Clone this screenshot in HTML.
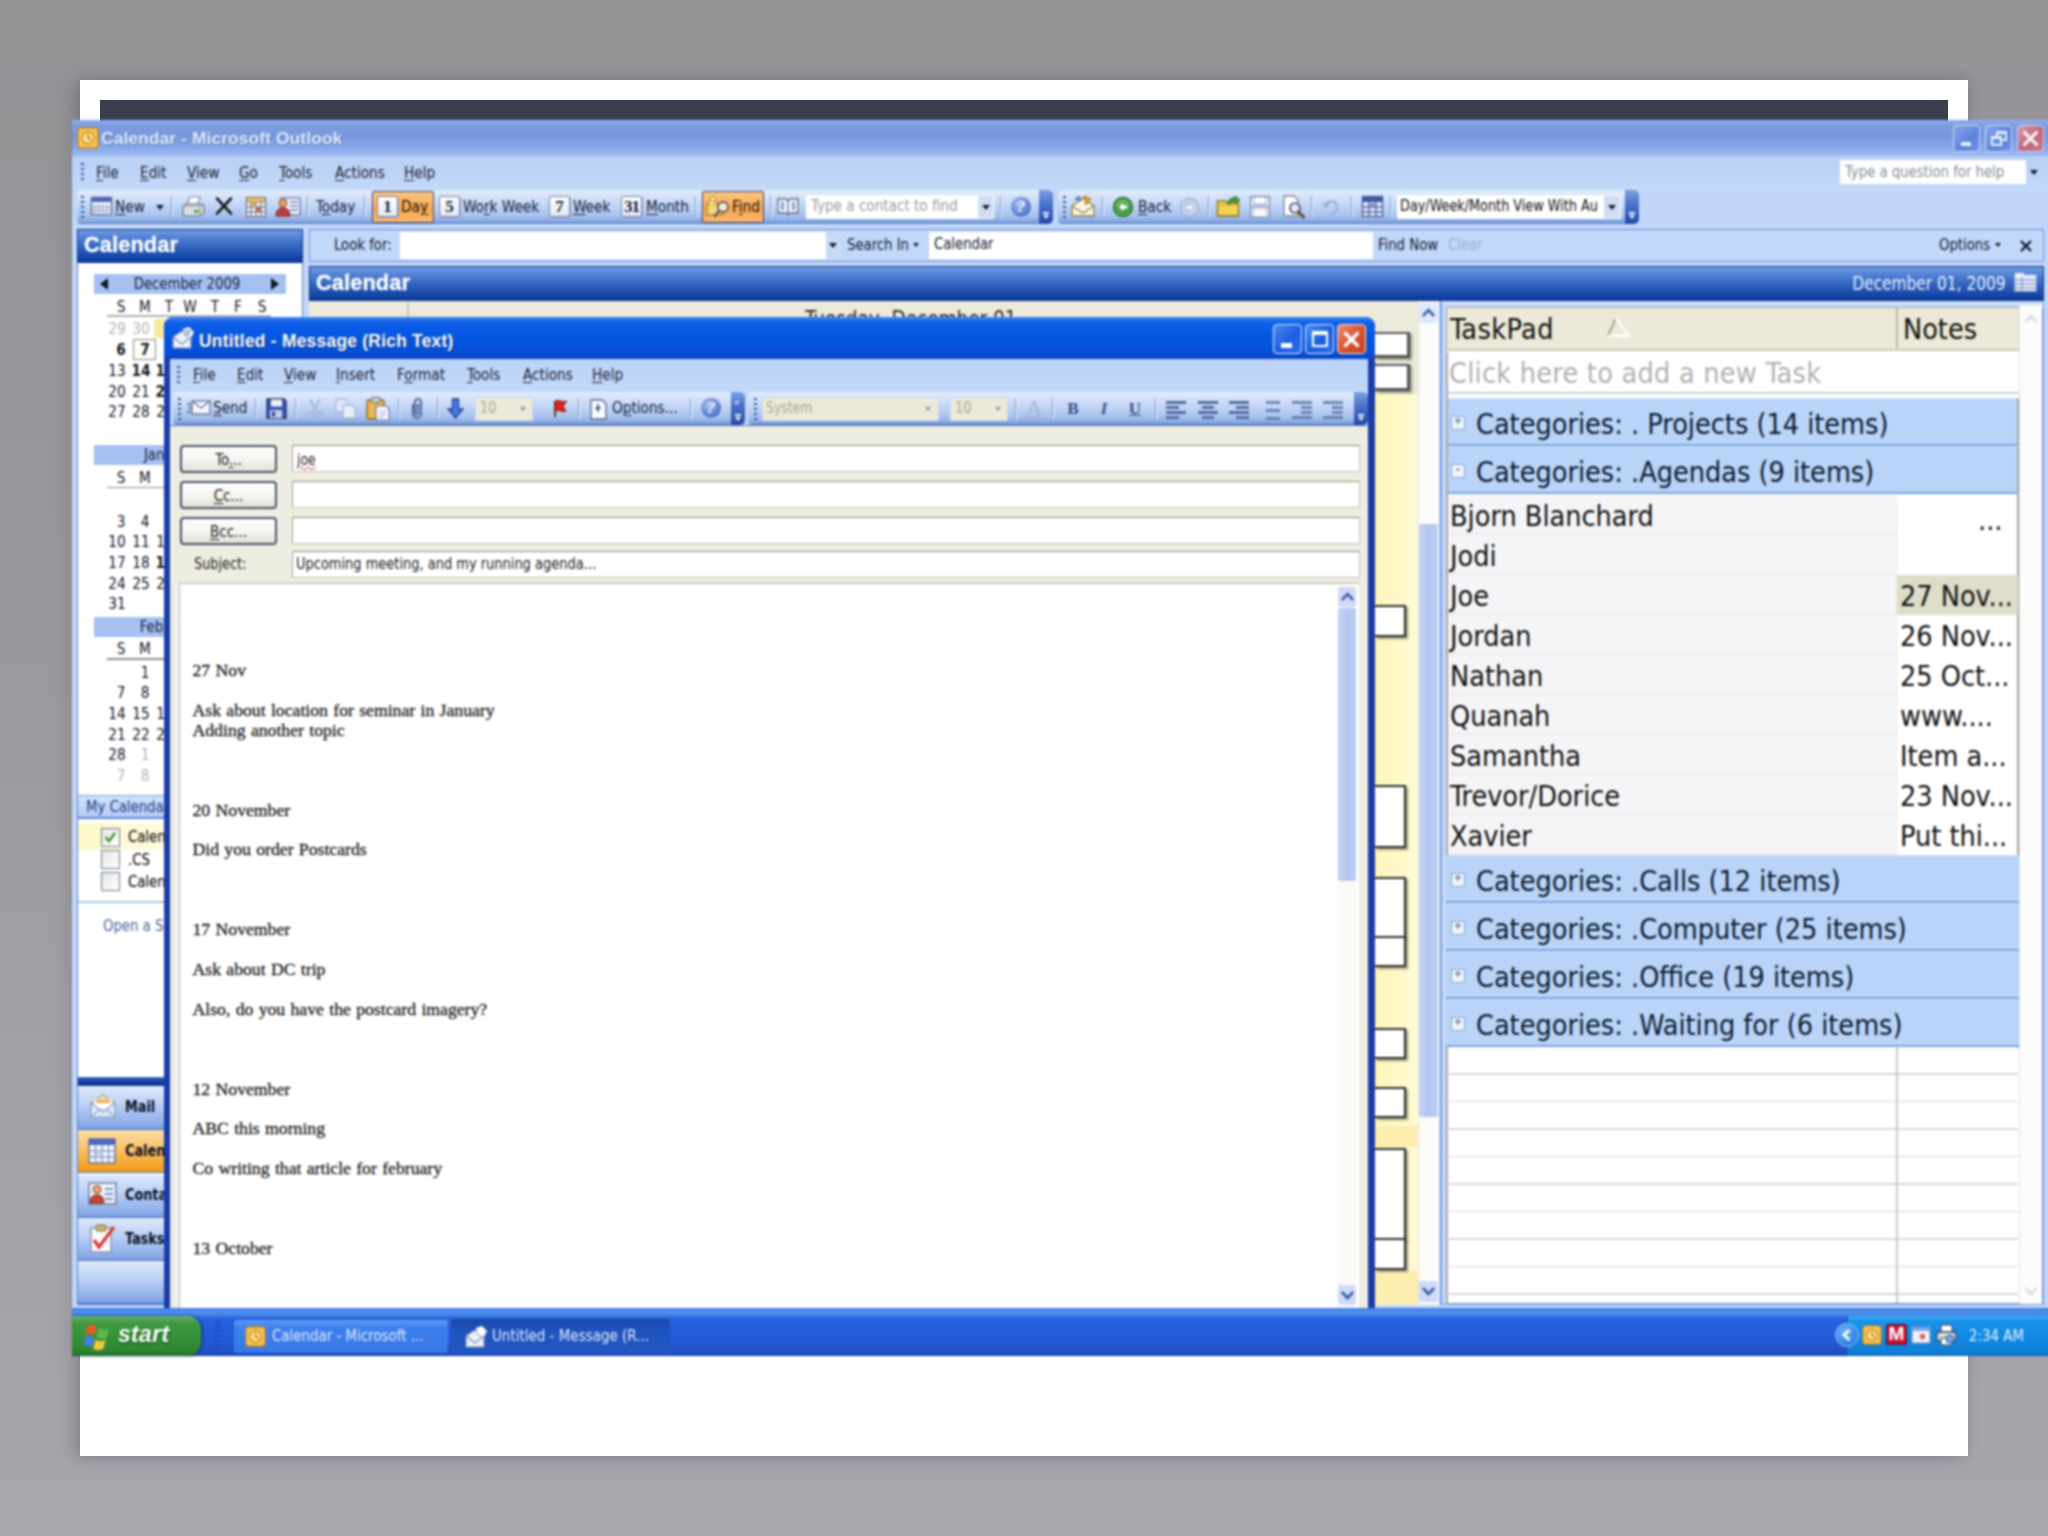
<!DOCTYPE html>
<html lang="en">
<head>
<meta charset="utf-8">
<title>Calendar - Microsoft Outlook</title>
<style>
html,body{margin:0;padding:0;}
body{width:2048px;height:1536px;overflow:hidden;background:#9f9ea4;}
#root{position:relative;width:2048px;height:1536px;overflow:hidden;
  background:linear-gradient(180deg,#949396 0%,#9a989d 40%,#a5a3aa 80%,#a9a7ae 100%);
  font-family:"DejaVu Sans","Liberation Sans",sans-serif;font-stretch:condensed;font-size:16.5px;color:#000;}
#root div,#root span,#root svg{position:absolute;box-sizing:border-box;white-space:nowrap;}
#root span.i{position:static;}
#root u{text-decoration:underline;text-underline-offset:2px;text-decoration-thickness:1.3px;}
#shot{left:0;top:0;width:2090px;height:1536px;filter:blur(0.8px);}
.slide{left:80px;top:80px;width:1888px;height:1376px;background:#fff;box-shadow:-8px 2px 18px rgba(60,60,70,.24),0 0 10px rgba(60,60,70,.16);}
.darkbar{left:100px;top:100px;width:1848px;height:22px;background:#3a3d4d;}
/* outlook main window */
.ol{left:72px;top:120px;width:2010px;height:1236px;background:#c1d6f8;}
.ol-title{left:72px;top:120px;width:2010px;height:36px;background:linear-gradient(180deg,#8fb0f0 0%,#7d9de2 14%,#7796dc 45%,#86a6e8 75%,#9dbbf1 100%);}
.ol-title .txt{left:29px;top:0;line-height:37px;font-family:"Liberation Sans",sans-serif;font-weight:bold;font-size:17.3px;color:#dfe9fb;letter-spacing:.15px;text-shadow:1px 1px 1px #5b78bd;}
.menubar{left:72px;top:156px;width:2010px;height:34px;background:linear-gradient(180deg,#b9cff5,#c3d9fa);}
.mi{top:156px;line-height:33px;font-size:16.5px;color:#1a2233;transform:scaleX(.92);transform-origin:0 50%;}
.tb{top:190px;height:34px;background:linear-gradient(180deg,#e2ecfc 0%,#c9dbf8 35%,#a9c3ee 75%,#86a8e2 92%,#5f84c8 100%);border-radius:4px 0 0 4px;}
.tbend{top:190px;width:14px;height:34px;background:linear-gradient(180deg,#7e9fe0 0%,#4b74cc 40%,#2549a4 100%);border-radius:0 5px 5px 0;}
.grip{width:3px;height:22px;top:196px;background:repeating-linear-gradient(180deg,#3b5a9a 0 2px,transparent 2px 5px);}
.sep{top:196px;width:2px;height:22px;background:linear-gradient(90deg,#7d9ad0 0 1px,#eef4ff 1px 2px);}
.tt{top:190px;line-height:33px;font-size:16.5px;color:#15203a;transform:scaleX(.92);transform-origin:0 50%;}
.s{transform:scaleX(.92);transform-origin:0 50%;}
.sr{transform:scaleX(.92);transform-origin:100% 50%;}
.sc{transform:scaleX(.92);transform-origin:50% 50%;}
.navhead{background:linear-gradient(180deg,#6f9ae0 0%,#4a7bd0 30%,#1d4fae 75%,#0c3b97 100%);border:1px solid #0f3a8c;}
.navhead .txt{left:6px;top:0;font-family:"Liberation Sans",sans-serif;font-weight:bold;font-size:21.5px;color:#fff;letter-spacing:.25px;-webkit-text-stroke:.3px #fff;}

.wbtn{border:1px solid #c9d8f7;border-radius:4px;}
.arr{width:0;height:0;border-left:4px solid transparent;border-right:4px solid transparent;border-top:5px solid #1a1a28;}
.endmark{left:3px;top:22px;width:8px;height:8px;}
.endmark:before{content:"";position:absolute;left:1px;top:0;width:6px;height:2px;background:#e8efff;}
.endmark:after{content:"";position:absolute;left:1px;top:3px;border-left:3.500px solid transparent;border-right:3.500px solid transparent;border-top:4px solid #e8efff;}
.obtn{background:linear-gradient(180deg,#fbc57f,#f8a752 60%,#f9b86c);border:1.500px solid #3a3f73;border-radius:2px;}
.cal1{width:21px;height:21px;background:linear-gradient(180deg,#fff,#e4e9f6);border:1.500px solid #7482a8;border-radius:2px;box-shadow:1px 1px 0 #9aa6c4;font-family:"Liberation Serif",serif;font-weight:bold;font-size:17px;line-height:20px;text-align:center;color:#1a1f3a;}
.helpq{width:22px;height:22px;border-radius:11px;background:radial-gradient(circle at 40% 35%,#a9c3f3,#4b74cf 70%,#3059b8);border:1px solid #c5d5f5;color:#f2f6ff;font-family:"Liberation Serif",serif;font-weight:bold;font-style:italic;font-size:17px;line-height:20px;text-align:center;}

.dn{width:24px;text-align:center;line-height:20px;font-size:16.5px;color:#15151f;transform:scaleX(.92);}
.dn.g{color:#b4b4b4;}
.dn.b{font-weight:bold;}
.cb{width:19px;height:19px;background:linear-gradient(135deg,#e6e6e0,#fff);border:1.500px solid #6a7a94;}
.nb{width:224px;background:linear-gradient(180deg,#dbe8fc 0%,#bcd2f6 40%,#8fb0ea 85%,#7b9fe3 100%);border-top:1px solid #f3f7ff;border-bottom:1.500px solid #3f68c0;}
.nb.o{background:linear-gradient(180deg,#fcdda4 0%,#f9c46c 40%,#f5a42a 85%,#f29a1c 100%);border-top:1px solid #fdebc8;}
.nt{font-family:"DejaVu Sans",sans-serif;font-weight:bold;font-size:15.5px;color:#0a1026;transform:scaleX(.92);transform-origin:0 50%;}

.ap{left:1375px;width:31px;background:#fff;border:2px solid #2b2b2b;border-left:0;box-shadow:2px 2px 2px rgba(90,90,70,.6);}
.tp{font-size:28.500px;color:#101010;}
.cat{left:1446px;width:573px;height:48px;background:#b9d4f8;border-bottom:2.500px solid #7ea4e2;border-top:1px solid #cfe0fa;}
.cat .ct{left:30px;top:3px;line-height:46px;color:#0c1a30;}
.pm{left:5px;top:17px;width:14px;height:14px;border:1.500px solid #8fa6cf;background:#eef4fd;font-family:"Liberation Mono",monospace;font-size:13px;line-height:10px;text-align:center;color:#3a4f7a;}
.it{left:1450px;line-height:40px;margin-top:2px;}
.nt2{left:1900px;line-height:40px;margin-top:2px;}

.fb{font-family:"Liberation Serif",serif;font-weight:bold;font-size:17px;line-height:33px;text-align:center;color:#3a4f8a;}
.al{top:399px;width:20px;height:20px;}
.al i{display:block;height:3px;margin-top:2px;background:#566ca6;}
.xb{width:97px;height:28px;border:2px solid #46536b;border-radius:4px;background:linear-gradient(180deg,#fdfdfc,#f3f3ef 60%,#e2e1d6);text-align:center;line-height:27px;font-size:15px;color:#1a1a1a;}
.fld{left:292px;width:1068px;height:27px;background:#fff;border:1.500px solid #c4c2b4;border-top-color:#8a8a80;border-left-color:#a5a598;}
.bt{left:192.500px;font-family:"Liberation Serif",serif;font-size:17.700px;line-height:20px;color:#1c1c1c;letter-spacing:0;word-spacing:.9px;-webkit-text-stroke:.3px #1c1c1c;}
</style>
</head>
<body>
<div id="root">
 <div class="slide"></div>
 <div class="darkbar"></div>
 <div id="shot">
 <div class="ol"></div>
 <div class="ol-title"><div class="txt">Calendar - Microsoft Outlook</div></div>
 <div class="menubar"></div>

 <!-- title icon + buttons -->
 <svg style="left:77px;top:127px" width="22" height="22" viewBox="0 0 22 22"><rect x="1" y="1" width="20" height="20" rx="3" fill="#f4c65a" stroke="#c48a1e" stroke-width="1.5"/><circle cx="11" cy="11" r="6" fill="#fbe39a" stroke="#e09a20" stroke-width="2"/><path d="M11 7v4l3 2" stroke="#c07a10" stroke-width="1.6" fill="none"/></svg>
 <div class="wbtn" style="left:1953px;top:125px;width:27px;height:27px;background:linear-gradient(135deg,#86a6ee,#5d82dc 60%,#6e93e6)"><div style="left:7px;top:16px;width:10px;height:4px;background:#e8effc"></div></div>
 <div class="wbtn" style="left:1985px;top:125px;width:27px;height:27px;background:linear-gradient(135deg,#86a6ee,#5d82dc 60%,#6e93e6)"><div style="left:10px;top:5px;width:11px;height:10px;border:2px solid #e4ecfb;border-top-width:3px"></div><div style="left:5px;top:10px;width:11px;height:10px;border:2px solid #e4ecfb;border-top-width:3px;background:#6a8ee2"></div></div>
 <div class="wbtn" style="left:2017px;top:125px;width:27px;height:27px;background:linear-gradient(135deg,#d99aa8,#c0677c 55%,#c97a8e)"><svg style="left:3px;top:3px" width="19" height="19" viewBox="0 0 19 19"><path d="M3.5 3.5l12 12M15.5 3.5l-12 12" stroke="#f7eef2" stroke-width="3.2" stroke-linecap="round"/></svg></div>
 <!-- menu -->
 <div class="grip" style="left:81px;top:163px;height:19px"></div>
 <div class="mi" style="left:96px"><u>F</u>ile</div>
 <div class="mi" style="left:140px"><u>E</u>dit</div>
 <div class="mi" style="left:187px"><u>V</u>iew</div>
 <div class="mi" style="left:239px"><u>G</u>o</div>
 <div class="mi" style="left:279px"><u>T</u>ools</div>
 <div class="mi" style="left:335px"><u>A</u>ctions</div>
 <div class="mi" style="left:404px"><u>H</u>elp</div>
 <div style="left:1840px;top:160px;width:186px;height:24px;background:#fff"></div>
 <div class="s" style="left:1845px;top:160px;line-height:23px;font-size:16px;color:#8a8e98">Type a question for help</div>
 <div class="arr" style="left:2030px;top:170px"></div>
 <!--MENU-->

 <!-- toolbar 1 -->
 <div class="tb" style="left:77px;width:962px"></div><div class="tbend" style="left:1039px"><div class="endmark"></div></div>
 <div class="grip" style="left:81px"></div>
 <svg style="left:90px;top:195px" width="24" height="22" viewBox="0 0 24 22"><rect x="1.5" y="2.5" width="20" height="17" fill="#f4f7fd" stroke="#5f6f95" stroke-width="1.4"/><rect x="1.5" y="2.5" width="20" height="4.5" fill="#4a66b8"/><path d="M5 9v9M9 9v9M13 9v9M17 9v9M2 12h19M2 15.500h19" stroke="#8b98bd" stroke-width="1"/></svg>
 <div class="tt" style="left:115px"><u>N</u>ew</div>
 <div class="arr" style="left:156px;top:205px"></div>
 <div class="sep" style="left:171px"></div>
 <svg style="left:181px;top:195px" width="25" height="23" viewBox="0 0 25 23"><path d="M6 9l3-7h10l-2 7z" fill="#fff" stroke="#7c879c" stroke-width="1.2"/><path d="M2 11l4-2h15l2 2v7l-4 3H2z" fill="#d9dde6" stroke="#6c7486" stroke-width="1.2"/><path d="M2 11h17v10M19 11l4-2" stroke="#8d94a4" stroke-width="1" fill="none"/><rect x="13" y="15" width="5" height="3" fill="#58b148"/></svg>
 <svg style="left:214px;top:196px" width="20" height="20" viewBox="0 0 20 20"><path d="M3 2.500l14 15M17 2.500l-14 15" stroke="#1c1c24" stroke-width="2.700" stroke-linecap="round"/></svg>
 <svg style="left:245px;top:196px" width="22" height="22" viewBox="0 0 22 22"><rect x="1.500" y="1.500" width="19" height="19" fill="#fdfbe8" stroke="#6b7189" stroke-width="1.2"/><path d="M6 2v18M11 2v18M16 2v18M2 6h18M2 11h18M2 16h18" stroke="#7683a8" stroke-width="1.3"/><rect x="6.500" y="6.500" width="4" height="4" fill="#e8a33b"/><rect x="11.500" y="11.500" width="4" height="4" fill="#d2553f"/><rect x="2" y="2" width="18" height="3.500" fill="#f2c24e"/></svg>
 <svg style="left:275px;top:195px" width="26" height="23" viewBox="0 0 26 23"><rect x="6" y="3" width="19" height="17" fill="#eef2fb" stroke="#68769c" stroke-width="1.300"/><path d="M15 7h8M15 11h8M15 15h8" stroke="#6f83bb" stroke-width="1.600"/><circle cx="8" cy="8" r="4" fill="#e5a06b" stroke="#8a4e2b" stroke-width="1"/><path d="M1 21c0-6 3-8 7-8s7 2 7 8z" fill="#c03c3c" stroke="#7d2020" stroke-width="1"/></svg>
 <div class="sep" style="left:307px"></div>
 <div class="tt" style="left:316px">T<u>o</u>day</div>
 <div class="sep" style="left:364px"></div>
 <div class="obtn" style="left:372px;top:191px;width:62px;height:32px"></div>
 <div class="cal1" style="left:377px;top:196px"><span class="i">1</span></div>
 <div class="tt" style="left:401px;color:#1a1205">Da<u>y</u></div>
 <div class="cal1" style="left:439px;top:196px"><span class="i">5</span></div>
 <div class="tt" style="left:463px">Wo<u>r</u>k Week</div>
 <div class="cal1" style="left:549px;top:196px"><span class="i">7</span></div>
 <div class="tt" style="left:573px"><u>W</u>eek</div>
 <div class="cal1" style="left:621px;top:196px;letter-spacing:-1px"><span class="i">31</span></div>
 <div class="tt" style="left:646px"><u>M</u>onth</div>
 <div class="sep" style="left:695px"></div>
 <div class="obtn" style="left:702px;top:191px;width:62px;height:32px"></div>
 <svg style="left:706px;top:195px" width="26" height="24" viewBox="0 0 26 24"><rect x="1" y="9" width="15" height="11" fill="#f6d774" stroke="#a4781f" stroke-width="1.200"/><path d="M1 9l3-4h5l2 4" fill="#fbe7a0" stroke="#a4781f" stroke-width="1.200"/><circle cx="17" cy="12" r="5" fill="#fdfdfd" fill-opacity=".800" stroke="#5a5a66" stroke-width="1.800"/><path d="M13 16l-4 5" stroke="#5a5a66" stroke-width="2.500" stroke-linecap="round"/><circle cx="7" cy="4" r="2.500" fill="#fff3c4" stroke="#b58920"/></svg>
 <div class="tt" style="left:732px;color:#1a1205">F<u>i</u>nd</div>
 <div class="sep" style="left:770px"></div>
 <svg style="left:776px;top:196px" width="24" height="21" viewBox="0 0 24 21"><path d="M2 3h8l2 2 2-2h8v14h-8l-2 2-2-2H2z" fill="#f3f5fa" stroke="#5b6b93" stroke-width="1.300"/><path d="M12 5v14" stroke="#5b6b93" stroke-width="1.200"/><path d="M5 6v8h3V6zM16 6v8h3V6z" fill="#8ea0c8"/></svg>
 <div style="left:806px;top:195px;width:188px;height:24px;background:#fff"></div>
 <div style="left:811px;top:194px;line-height:24px;font-size:15.100px;color:#9a9da6">Type a contact to find</div>
 <div style="left:978px;top:196px;width:15px;height:22px;background:#cfdcf4"></div>
 <div class="arr" style="left:982px;top:205px"></div>
 <div class="sep" style="left:1000px"></div>
 <div class="helpq" style="left:1010px;top:196px"><span class="i">?</span></div>
 <!-- toolbar 2 -->
 <div class="tb" style="left:1058px;width:567px"></div><div class="tbend" style="left:1625px"><div class="endmark"></div></div>
 <div class="grip" style="left:1063px"></div>
 <svg style="left:1070px;top:194px" width="26" height="25" viewBox="0 0 26 25"><path d="M2 12l11-8 11 8v10H2z" fill="#fdf6dc" stroke="#8a7a4a" stroke-width="1.300"/><path d="M2 12l11 7 11-7" fill="none" stroke="#8a7a4a" stroke-width="1.200"/><path d="M14 2l7 3-5 6z" fill="#f0a83a" stroke="#9a6a1a"/><path d="M5 5l4-3 2 5z" fill="#6fa3e8" stroke="#3c65a8"/></svg>
 <div class="sep" style="left:1102px"></div>
 <svg style="left:1112px;top:196px" width="22" height="22" viewBox="0 0 22 22"><circle cx="11" cy="11" r="9.500" fill="#4aa54a" stroke="#2c6e2e" stroke-width="1.300"/><circle cx="11" cy="9" r="6" fill="#7fd07a" fill-opacity=".550"/><path d="M12 5.500L6.500 11l5.500 5.500v-3.500h4v-4h-4z" fill="#fff" stroke="#2c6e2e" stroke-width=".800"/></svg>
 <div class="tt" style="left:1138px"><u>B</u>ack</div>
 <svg style="left:1179px;top:197px" width="21" height="21" viewBox="0 0 22 22"><circle cx="11" cy="11" r="9.500" fill="#c6d3ee" stroke="#9aa9cc" stroke-width="1.300"/><path d="M10 5.500L15.500 11 10 16.500v-3.500H6v-4h4z" fill="#eef2fb" stroke="#9aa9cc" stroke-width=".800"/></svg>
 <div class="sep" style="left:1208px"></div>
 <svg style="left:1216px;top:195px" width="25" height="23" viewBox="0 0 25 23"><path d="M1.500 6h8l2 2h11v13h-21z" fill="#f2d251" stroke="#8d6f14" stroke-width="1.300"/><path d="M1.500 10h21" stroke="#c9a42c"/><path d="M12 9c0-5 4-7 8-6l-1-2 5 4-5 3 0-2c-3 0-5 1-5 3z" fill="#3da33d" stroke="#1f6a21" stroke-width=".900"/></svg>
 <svg style="left:1249px;top:195px" width="22" height="24" viewBox="0 0 22 24"><rect x="1.500" y="1.500" width="19" height="21" fill="#e9eef9" stroke="#7f8db3" stroke-width="1.300"/><rect x="5" y="2" width="12" height="7" fill="#fff" stroke="#9aa6c6"/><rect x="4" y="13" width="14" height="9" fill="#f8f9fc" stroke="#9aa6c6"/><path d="M2 11h18" stroke="#9aa6c6" stroke-width="1.500"/></svg>
 <svg style="left:1281px;top:194px" width="24" height="25" viewBox="0 0 24 25"><path d="M3 2h10l4 4v16H3z" fill="#fff" stroke="#7a84a0" stroke-width="1.300"/><circle cx="14" cy="14" r="5" fill="#dfe9fb" stroke="#4a4f60" stroke-width="1.700"/><path d="M17.500 18l5 5" stroke="#6a4a20" stroke-width="3" stroke-linecap="round"/></svg>
 <div class="sep" style="left:1311px"></div>
 <svg style="left:1321px;top:197px" width="20" height="20" viewBox="0 0 20 20"><path d="M4 9c2-6 12-6 12 1s-5 7-7 7" fill="none" stroke="#9fb0d6" stroke-width="2.400"/><path d="M1 6l4 6 4-5z" fill="#9fb0d6"/></svg>
 <div class="sep" style="left:1351px"></div>
 <svg style="left:1361px;top:195px" width="23" height="23" viewBox="0 0 23 23"><rect x="1.500" y="1.500" width="20" height="20" fill="#dfe6f6" stroke="#46598e" stroke-width="1.300"/><rect x="2" y="2" width="19" height="5" fill="#3e58a6"/><path d="M2 12h19M2 17h19M8 7v14M15 7v14" stroke="#5c70a8" stroke-width="1.500"/><rect x="9" y="8" width="5" height="3.500" fill="#7d96d6"/></svg>
 <div class="sep" style="left:1390px"></div>
 <div style="left:1397px;top:195px;width:224px;height:24px;background:#fff"></div>
 <div class="s" style="left:1400px;top:194px;width:221px;overflow:hidden;line-height:24px;font-size:15.500px;color:#111">Day/Week/Month View With Au</div>
 <div style="left:1604px;top:196px;width:16px;height:22px;background:#cfdcf4"></div>
 <div class="arr" style="left:1608px;top:205px"></div>
 <!--TOOLBAR-->

 <!-- navigation pane -->
 <div style="left:77px;top:229px;width:226px;height:1076px;background:#fff;border:1px solid #5c82cc"></div>
 <div class="navhead" style="left:77px;top:229px;width:226px;height:34px"><div class="txt" style="line-height:31px">Calendar</div></div>
 <!-- date navigator -->
 <div style="left:94px;top:274px;width:192px;height:20px;background:#a6c0f2"></div>
 <div class="sc" style="left:91px;top:274px;width:192px;text-align:center;line-height:20px;font-size:16px;color:#16233f">December 2009</div>
 <div style="left:100px;top:278px;border-top:6px solid transparent;border-bottom:6px solid transparent;border-right:8px solid #101828"></div>
 <div style="left:271px;top:278px;border-top:6px solid transparent;border-bottom:6px solid transparent;border-left:8px solid #101828"></div>
 <div class="dn" style="left:109px;top:297px">S</div><div class="dn" style="left:133px;top:297px">M</div><div class="dn" style="left:157px;top:297px">T</div><div class="dn" style="left:178px;top:297px">W</div><div class="dn" style="left:203px;top:297px">T</div><div class="dn" style="left:226px;top:297px">F</div><div class="dn" style="left:250px;top:297px">S</div>
 <div style="left:107px;top:315px;width:164px;height:1.500px;background:#b0b0b0"></div>
 <div style="left:154px;top:319px;width:12px;height:19px;background:#fbe9a0"></div>
 <div class="dn g" style="left:105px;top:319px">29</div><div class="dn g" style="left:129px;top:319px">30</div>
 <div class="dn b" style="left:109px;top:340px">6</div><div style="left:133px;top:339px;width:23px;height:21px;border:1.500px solid #8a8a7a;background:#fdfdf8"></div><div class="dn b" style="left:133px;top:340px">7</div>
 <div class="dn" style="left:105px;top:361px">13</div><div class="dn b" style="left:129px;top:361px">14</div><div class="dn b" style="left:153px;top:361px">15</div>
 <div class="dn" style="left:105px;top:382px">20</div><div class="dn" style="left:129px;top:382px">21</div><div class="dn b" style="left:153px;top:382px">22</div>
 <div class="dn" style="left:105px;top:402px">27</div><div class="dn" style="left:129px;top:402px">28</div><div class="dn" style="left:153px;top:402px">29</div>
 <div style="left:94px;top:445px;width:192px;height:20px;background:#a6c0f2"></div>
 <div class="sc" style="left:92px;top:445px;width:192px;text-align:center;line-height:20px;font-size:16px;color:#16233f">January 2010</div>
 <div class="dn" style="left:109px;top:468px">S</div><div class="dn" style="left:133px;top:468px">M</div>
 <div style="left:107px;top:486.500px;width:164px;height:1.500px;background:#8a8a8a"></div>
 <div class="dn" style="left:109px;top:512px">3</div><div class="dn" style="left:133px;top:512px">4</div>
 <div class="dn" style="left:105px;top:532px">10</div><div class="dn" style="left:129px;top:532px">11</div><div class="dn" style="left:153px;top:532px">12</div>
 <div class="dn" style="left:105px;top:553px">17</div><div class="dn" style="left:129px;top:553px">18</div><div class="dn b" style="left:153px;top:553px">19</div>
 <div class="dn" style="left:105px;top:574px">24</div><div class="dn" style="left:129px;top:574px">25</div><div class="dn" style="left:153px;top:574px">26</div>
 <div class="dn" style="left:105px;top:594px">31</div>
 <div style="left:94px;top:617px;width:192px;height:20px;background:#a6c0f2"></div>
 <div class="sc" style="left:92px;top:617px;width:192px;text-align:center;line-height:20px;font-size:16px;color:#16233f">February 2010</div>
 <div class="dn" style="left:109px;top:639px">S</div><div class="dn" style="left:133px;top:639px">M</div>
 <div style="left:107px;top:658px;width:164px;height:1.500px;background:#8a8a8a"></div>
 <div class="dn" style="left:133px;top:663px">1</div>
 <div class="dn" style="left:109px;top:683px">7</div><div class="dn" style="left:133px;top:683px">8</div>
 <div class="dn" style="left:105px;top:704px">14</div><div class="dn" style="left:129px;top:704px">15</div><div class="dn" style="left:153px;top:704px">16</div>
 <div class="dn" style="left:105px;top:725px">21</div><div class="dn" style="left:129px;top:725px">22</div><div class="dn" style="left:153px;top:725px">23</div>
 <div class="dn" style="left:105px;top:745px">28</div><div class="dn g" style="left:133px;top:745px">1</div>
 <div class="dn g" style="left:109px;top:766px">7</div><div class="dn g" style="left:133px;top:766px">8</div>
 <!-- my calendars -->
 <div style="left:78px;top:795px;width:224px;height:24px;background:linear-gradient(180deg,#d3e3fb,#b2caf4);border-top:1px solid #7d9fdc;border-bottom:2px solid #5f86d2"></div>
 <div class="s" style="left:86px;top:795px;line-height:23px;font-size:16px;color:#1d3f8a">My Calendars</div>
 <div style="left:78px;top:823px;width:224px;height:27px;background:linear-gradient(90deg,#fcf8c6,#fffef0 60%,#fff)"></div>
 <div class="cb" style="left:101px;top:828px"><svg style="left:1px;top:1px" width="15" height="15" viewBox="0 0 15 15"><path d="M2.500 7l3.500 4 6-8" fill="none" stroke="#2f9a33" stroke-width="2.400"/></svg></div>
 <div class="s" style="left:128px;top:826px;line-height:22px;font-size:16px">Calendar</div>
 <div class="cb" style="left:101px;top:850px"></div>
 <div class="s" style="left:128px;top:849px;line-height:22px;font-size:16px">.CS</div>
 <div class="cb" style="left:101px;top:872px"></div>
 <div class="s" style="left:128px;top:871px;line-height:22px;font-size:16px">Calendar</div>
 <div style="left:78px;top:901px;width:224px;height:2px;background:#a9c0ea"></div>
 <div class="s" style="left:103px;top:915px;line-height:22px;font-size:16px;color:#49689e">Open a Shared Calendar...</div>
 <!-- splitter + nav buttons -->
 <div style="left:78px;top:1077px;width:224px;height:9px;background:linear-gradient(180deg,#3f6fd0,#143f9e 50%,#0c348c)"></div>
 <div class="nb" style="left:78px;top:1086px;height:44px"></div>
 <div class="nb o" style="left:78px;top:1130px;height:43px"></div>
 <div class="nb" style="left:78px;top:1174px;height:44px"></div>
 <div class="nb" style="left:78px;top:1218px;height:43px"></div>
 <div class="nb" style="left:78px;top:1261px;height:43px"></div>
 <div class="nt" style="left:125px;top:1086px;line-height:42px">Mail</div>
 <div class="nt" style="left:125px;top:1130px;line-height:42px">Calendar</div>
 <div class="nt" style="left:125px;top:1174px;line-height:42px">Contacts</div>
 <div class="nt" style="left:125px;top:1218px;line-height:42px">Tasks</div>
 <svg style="left:88px;top:1091px" width="30" height="30" viewBox="0 0 30 30"><path d="M3 12l12-8 12 8v14H3z" fill="#f3e7c6" stroke="#b89c5a" stroke-width="1.200"/><path d="M6 8h18v10H6z" fill="#fff" stroke="#c9ccd8"/><path d="M3 12l12 9 12-9v14H3z" fill="#dfe8fa" stroke="#8ea3cf" stroke-width="1.200"/><path d="M3 26l9-8M27 26l-9-8" stroke="#8ea3cf" stroke-width="1.200"/><path d="M8 9h14v3H8z" fill="#f0b04a"/></svg>
 <svg style="left:87px;top:1136px" width="30" height="30" viewBox="0 0 30 30"><rect x="2" y="3" width="26" height="24" fill="#f4f6fc" stroke="#5b6d9c" stroke-width="1.400"/><rect x="2" y="3" width="26" height="6" fill="#4a68c0"/><path d="M8.500 9v18M15 9v18M21.500 9v18M2 15h26M2 21h26" stroke="#8c9bc6" stroke-width="1.400"/><rect x="9" y="15.500" width="5.500" height="5" fill="#c9d3ee"/></svg>
 <svg style="left:87px;top:1180px" width="31" height="28" viewBox="0 0 31 28"><rect x="2" y="3" width="27" height="21" fill="#eef2fb" stroke="#65749c" stroke-width="1.400"/><path d="M18 9h8M18 14h8M18 19h8" stroke="#7a8fc8" stroke-width="2"/><circle cx="10" cy="9.500" r="4" fill="#e5a570" stroke="#8a4e2b"/><path d="M3 23c0-6 3-8 7-8s7 2 7 8z" fill="#c2482f" stroke="#7d2b18"/></svg>
 <svg style="left:88px;top:1222px" width="30" height="32" viewBox="0 0 30 32"><rect x="3" y="6" width="20" height="24" fill="#fbfbfd" stroke="#8a8fa4" stroke-width="1.400"/><rect x="8" y="3" width="10" height="6" rx="1.500" fill="#c8b27a" stroke="#7f6c38"/><path d="M6 18l5 7L26 5" fill="none" stroke="#d63a2f" stroke-width="3.200"/></svg>
 <!--NAV-->

 <!-- look for bar -->
 <div style="left:309px;top:229px;width:1735px;height:33px;background:#c2d8fa;border:1.500px solid #6c92d8"></div>
 <div class="s" style="left:334px;top:230px;line-height:30px;font-size:16px;color:#10182c">Look for:</div>
 <div style="left:400px;top:232px;width:441px;height:27px;background:#fff"></div>
 <div style="left:826px;top:232px;width:15px;height:27px;background:#c9daf6"></div>
 <div class="arr" style="left:829px;top:243px"></div>
 <div class="s" style="left:847px;top:230px;line-height:30px;font-size:16px;color:#10182c">Search In</div>
 <div class="arr" style="left:913px;top:243px;border-left-width:3.500px;border-right-width:3.500px;border-top-width:4.500px"></div>
 <div style="left:929px;top:232px;width:444px;height:27px;background:#fff"></div>
 <div class="s" style="left:934px;top:229px;line-height:30px;font-size:16px;color:#10182c">Calendar</div>
 <div class="s" style="left:1378px;top:230px;line-height:30px;font-size:16px;color:#10182c">Find Now</div>
 <div class="s" style="left:1448px;top:230px;line-height:30px;font-size:16px;color:#9db0d4">Clear</div>
 <div class="s" style="left:1939px;top:230px;line-height:30px;font-size:16px;color:#10182c">Options</div>
 <div class="arr" style="left:1995px;top:243px;border-left-width:3.500px;border-right-width:3.500px;border-top-width:4.500px"></div>
 <svg style="left:2019px;top:239px" width="14" height="14" viewBox="0 0 14 14"><path d="M2 2l10 10M12 2L2 12" stroke="#10182c" stroke-width="2.400"/></svg>
 <!-- calendar header -->
 <div class="navhead" style="left:309px;top:266px;width:1735px;height:35px"><div class="txt" style="line-height:32px">Calendar</div></div>
 <div class="sr" style="right:84px;top:267px;line-height:33px;font-size:18.600px;color:#e6eefc">December 01, 2009</div>
 <svg style="left:2014px;top:272px" width="23" height="21" viewBox="0 0 23 21"><rect x="1" y="3" width="21" height="16" fill="#e9eefa" stroke="#c5d0ea"/><rect x="1" y="1" width="9" height="4" fill="#e9eefa"/><path d="M1 8h21M1 12h21M1 16h21M8 5v14" stroke="#8ea3d2" stroke-width="1.300"/></svg>
 <!-- day view -->
 <div style="left:309px;top:301px;width:1110px;height:1004px;background:#fffbd2"></div>
 <div style="left:309px;top:301px;width:1110px;height:93px;background:#eceadb"></div>
 <div style="left:407px;top:301px;width:1.500px;height:93px;background:#c9c7b8"></div>
 <div style="left:805px;top:304px;line-height:30px;font-size:20.500px;color:#2a2a2a">Tuesday, December 01</div>
 <div style="left:1375px;top:394px;width:43px;height:910px;background:linear-gradient(90deg,#fff6b8,#fffbd6)"></div>
 <div style="left:1375px;top:1126px;width:43px;height:21px;background:#fdeeb0"></div>
 <div style="left:1375px;top:1271px;width:43px;height:33px;background:#fdeeb0"></div>
 <div class="ap" style="top:332px;height:26px;width:35px;border-color:#555;border-width:2px 3px 3px 0"></div>
 <div class="ap" style="top:364px;height:27px;width:35px;border-color:#555;border-width:2px 3px 3px 0"></div>
 <div class="ap" style="top:605px;height:32px"></div>
 <div class="ap" style="top:785px;height:63px"></div>
 <div class="ap" style="top:877px;height:61px"></div>
 <div class="ap" style="top:936px;height:31px"></div>
 <div class="ap" style="top:1028px;height:31px"></div>
 <div class="ap" style="top:1087px;height:31px"></div>
 <div class="ap" style="top:1148px;height:92px"></div>
 <div class="ap" style="top:1238px;height:32px"></div>
 <!-- day view scrollbar -->
 <div style="left:1418px;top:301px;width:21px;height:1004px;background:#fbfbf8;border-left:1px solid #e4e4ea"></div>
 <div style="left:1419px;top:524px;width:19px;height:593px;background:linear-gradient(90deg,#c4d2f3,#b3c6f0 50%,#bccdf2);border-radius:2px"></div>
 <div style="left:1419px;top:303px;width:19px;height:20px;background:#dfe7fa;border-radius:3px"></div>
 <svg style="left:1421px;top:306px" width="15" height="13" viewBox="0 0 15 13"><path d="M2 10l5.500-6 5.500 6" fill="none" stroke="#4464b0" stroke-width="2.600"/></svg>
 <div style="left:1419px;top:1281px;width:19px;height:21px;background:#cfdaf6;border-radius:3px"></div>
 <svg style="left:1421px;top:1285px" width="15" height="13" viewBox="0 0 15 13"><path d="M2 3l5.500 6 5.500-6" fill="none" stroke="#3d5ba8" stroke-width="2.600"/></svg>
 <!--MAIN-->

 <!-- taskpad -->
 <div style="left:1440px;top:301px;width:604px;height:1004px;background:#fff;border:2px solid #7a9de0;border-top:0"></div>
 <div style="left:1442px;top:301px;width:4px;height:1003px;background:#c6d8f8"></div>
 <div style="left:1442px;top:301px;width:601px;height:7px;background:#c9dbf9"></div><div style="left:1446px;top:307px;width:573px;height:44px;background:#ece9d8;border-top:1.500px solid #a3a3a0;border-left:1.500px solid #a3a3a0;border-bottom:2px solid #cfcab6"></div>
 <div style="left:1896px;top:308px;width:1.500px;height:40px;background:#bcb8a4"></div>
 <div class="tp" style="left:1450px;top:308px;line-height:44px;letter-spacing:.4px">TaskPad</div>
 <div class="tp" style="left:1903px;top:308px;line-height:44px">Notes</div>
 <svg style="left:1606px;top:316px" width="26" height="22" viewBox="0 0 26 22"><path d="M10 2L2 20" stroke="#a9a592" stroke-width="2"/><path d="M10 2l13 18H2" fill="none" stroke="#fff" stroke-width="2.400"/></svg>
 <div class="tp" style="left:1449px;top:353.500px;line-height:40px;color:#b1b1b1;letter-spacing:.25px">Click here to add a new Task</div>
 <div style="left:1446px;top:392px;width:573px;height:2px;background:#d0d0d0"></div>
 <div class="cat" style="top:398px"><div class="pm">+</div><div class="tp ct">Categories: . Projects (14 items)</div></div>
 <div class="cat" style="top:446px"><div class="pm">-</div><div class="tp ct">Categories: .Agendas (9 items)</div></div>
 <div style="left:1447px;top:495px;width:449px;height:360px;background:repeating-linear-gradient(180deg,#f5f5f7 0 38.500px,#ececee 38.500px 40px)"></div><div style="left:1446px;top:352px;width:1.500px;height:952px;background:#a9a9a9"></div><div style="left:2017px;top:398px;width:1.500px;height:650px;background:#a9a9a9"></div>
 <div style="left:1897px;top:575px;width:121px;height:40px;background:#deddc9"></div>
 <div style="left:1896px;top:495px;width:1px;height:360px;background:#e9e9e9"></div>
 <div class="tp it" style="top:495px">Bjorn Blanchard</div><div class="tp nt2" style="top:499px;left:1978px">...</div>
 <div class="tp it" style="top:535px">Jodi</div>
 <div class="tp it" style="top:575px">Joe</div><div class="tp nt2" style="top:575px">27 Nov...</div>
 <div class="tp it" style="top:615px">Jordan</div><div class="tp nt2" style="top:615px">26 Nov...</div>
 <div class="tp it" style="top:655px">Nathan</div><div class="tp nt2" style="top:655px">25 Oct...</div>
 <div class="tp it" style="top:695px">Quanah</div><div class="tp nt2" style="top:695px">www....</div>
 <div class="tp it" style="top:735px">Samantha</div><div class="tp nt2" style="top:735px">Item a...</div>
 <div class="tp it" style="top:775px">Trevor/Dorice</div><div class="tp nt2" style="top:775px">23 Nov...</div>
 <div class="tp it" style="top:815px">Xavier</div><div class="tp nt2" style="top:815px">Put thi...</div>
 <div class="cat" style="top:855px"><div class="pm">+</div><div class="tp ct">Categories: .Calls (12 items)</div></div>
 <div class="cat" style="top:903px"><div class="pm">+</div><div class="tp ct">Categories: .Computer (25 items)</div></div>
 <div class="cat" style="top:951px"><div class="pm">+</div><div class="tp ct">Categories: .Office (19 items)</div></div>
 <div class="cat" style="top:999px"><div class="pm">+</div><div class="tp ct">Categories: .Waiting for (6 items)</div></div>
 <div style="left:1447px;top:1047px;width:571px;height:256px;background:repeating-linear-gradient(180deg,transparent 0 26px,#d9d9d9 26px 27.500px)"></div>
 <div style="left:1896px;top:1047px;width:1.500px;height:256px;background:#c8c8c8"></div>
 <div style="left:2019px;top:305px;width:23px;height:999px;background:#fcfcfa;border-left:1px solid #e2e2e2"></div>
 <svg style="left:2023px;top:312px" width="16" height="13" viewBox="0 0 15 13"><path d="M2 10l5.500-6 5.500 6" fill="none" stroke="#dcdcdc" stroke-width="2.600"/></svg>
 <svg style="left:2023px;top:1285px" width="16" height="13" viewBox="0 0 15 13"><path d="M2 3l5.500 6 5.500-6" fill="none" stroke="#dcdcdc" stroke-width="2.600"/></svg>
 <!--TASKPAD-->

 <!-- message window -->
 <div style="left:164px;top:317px;width:1211px;height:995px;background:#193ca8;border-radius:9px 9px 0 0"></div>
 <div style="left:164px;top:317px;width:1211px;height:41.500px;border-radius:9px 9px 0 0;background:linear-gradient(180deg,#3d86f2 0%,#0d5fe8 14%,#0456e1 50%,#0650d8 80%,#0a47c4 100%)"></div>
 <svg style="left:171px;top:326px" width="25" height="24" viewBox="0 0 25 24"><path d="M2 11l9-6 9 6v11H2z" fill="#eef2fb" stroke="#7d8db8" stroke-width="1.200"/><path d="M2 11l9 7 9-7" fill="none" stroke="#7d8db8" stroke-width="1.200"/><path d="M12 3l6-2 5 5-3 6-6-2z" fill="#fff" stroke="#9aa6c6"/><path d="M14 5h6M14 8h5" stroke="#5b78c8" stroke-width="1.300"/></svg>
 <div style="left:199px;top:318.500px;line-height:45px;font-family:'Liberation Sans',sans-serif;font-weight:bold;font-size:17.500px;color:#fff;letter-spacing:.2px;text-shadow:1px 1px 1px #0a2c82">Untitled - Message (Rich Text)</div>
 <div class="wbtn" style="left:1273px;top:324px;width:29px;height:30px;background:linear-gradient(135deg,#4f8df6,#1d5de0 55%,#2d70ee);border-color:#dfe9fb"><div style="left:7px;top:18px;width:11px;height:5px;background:#fff"></div></div>
 <div class="wbtn" style="left:1305px;top:324px;width:29px;height:30px;background:linear-gradient(135deg,#4f8df6,#1d5de0 55%,#2d70ee);border-color:#dfe9fb"><div style="left:6px;top:6px;width:16px;height:16px;border:2px solid #fff;border-top-width:4.500px"></div></div>
 <div class="wbtn" style="left:1337px;top:324px;width:29px;height:30px;background:linear-gradient(135deg,#ec8f6e,#d9502e 55%,#c83e20);border-color:#f5e3dc"><svg style="left:4px;top:5px" width="19" height="19" viewBox="0 0 19 19"><path d="M3.500 3.500l12 12M15.500 3.500l-12 12" stroke="#fff" stroke-width="3.200" stroke-linecap="round"/></svg></div>
 <div style="left:170px;top:358.500px;width:1198px;height:34px;background:linear-gradient(180deg,#bcd2f6,#c3d9fa)"></div>
 <div class="grip" style="left:177px;top:366px;height:19px"></div>
 <div class="mi" style="left:193px;top:358px"><u>F</u>ile</div>
 <div class="mi" style="left:237px;top:358px"><u>E</u>dit</div>
 <div class="mi" style="left:284px;top:358px"><u>V</u>iew</div>
 <div class="mi" style="left:336px;top:358px"><u>I</u>nsert</div>
 <div class="mi" style="left:397px;top:358px">F<u>o</u>rmat</div>
 <div class="mi" style="left:467px;top:358px"><u>T</u>ools</div>
 <div class="mi" style="left:523px;top:358px"><u>A</u>ctions</div>
 <div class="mi" style="left:592px;top:358px"><u>H</u>elp</div>
 <div style="left:170px;top:392px;width:1198px;height:34px;background:#c3d9fa"></div>
 <div class="tb" style="left:173px;top:392px;width:558px;height:33px"></div><div class="tbend" style="left:731px;top:392px;height:33px"><div class="endmark"></div><div style="left:3px;top:6px;font-size:9px;line-height:9px;color:#e8efff;font-weight:bold;letter-spacing:-1px">»</div></div>
 <div class="grip" style="left:178px;top:398px"></div>
 <svg style="left:187px;top:399px" width="24" height="18" viewBox="0 0 24 18"><rect x="5" y="2" width="18" height="13" fill="#f6f8fd" stroke="#5d6c94" stroke-width="1.300"/><path d="M5 2l9 7 9-7" fill="none" stroke="#5d6c94" stroke-width="1.200"/><path d="M0 5h4M1 9h3M0 13h4" stroke="#4a5f9a" stroke-width="1.500"/></svg>
 <div class="tt" style="left:213px;top:391px"><u>S</u>end</div>
 <div class="sep" style="left:255px;top:398px"></div>
 <svg style="left:265px;top:397px" width="23" height="23" viewBox="0 0 23 23"><path d="M2 2h17l2 2v17H2z" fill="#3a55b0" stroke="#1c2c6c" stroke-width="1.300"/><rect x="6" y="2.500" width="11" height="7" fill="#eef2fb"/><rect x="5" y="13" width="12" height="8" fill="#c5cde6"/><rect x="7" y="14.500" width="3" height="5" fill="#2a3f8c"/></svg>
 <div class="sep" style="left:295px;top:398px"></div>
 <svg style="left:305px;top:397px" width="20" height="23" viewBox="0 0 20 23"><path d="M5 2l8 14M15 2L7 16" stroke="#a9b8da" stroke-width="2"/><circle cx="5.500" cy="18" r="3" fill="none" stroke="#a9b8da" stroke-width="1.800"/><circle cx="14.500" cy="18" r="3" fill="none" stroke="#a9b8da" stroke-width="1.800"/></svg>
 <svg style="left:334px;top:397px" width="23" height="23" viewBox="0 0 23 23"><path d="M2 2h9l3 3v10H2z" fill="#dfe7f8" stroke="#a9b8da" stroke-width="1.300"/><path d="M9 8h9l3 3v10H9z" fill="#e8eefb" stroke="#a9b8da" stroke-width="1.300"/></svg>
 <svg style="left:365px;top:396px" width="26" height="25" viewBox="0 0 26 25"><rect x="2" y="4" width="17" height="19" rx="1.500" fill="#e8b84a" stroke="#8a6518" stroke-width="1.300"/><rect x="6" y="1.500" width="9" height="5" rx="1" fill="#c9ccd6" stroke="#666a78"/><path d="M11 10h10l3 3v11H11z" fill="#fbfcff" stroke="#6a7698" stroke-width="1.200"/><path d="M14 15h7M14 18h7M14 21h5" stroke="#8ea0cc" stroke-width="1.200"/></svg>
 <div class="sep" style="left:398px;top:398px"></div>
 <svg style="left:409px;top:396px" width="16" height="25" viewBox="0 0 16 25"><path d="M4 8v10a4 4 0 0 0 8 0V6a3 3 0 0 0-6 0v11a1.500 1.500 0 0 0 3 0V8" fill="none" stroke="#5d6fa8" stroke-width="2.200"/></svg>
 <div class="sep" style="left:437px;top:398px"></div>
 <svg style="left:447px;top:397px" width="17" height="23" viewBox="0 0 17 23"><path d="M5.500 2h6v10h4.500l-7.500 9L1 12h4.500z" fill="#4a78e0" stroke="#1f3f9c" stroke-width="1.300"/></svg>
 <div style="left:475px;top:397px;width:58px;height:24px;background:#ece9d8;border:1.500px solid #cdd9f2"></div>
 <div class="s" style="left:480px;top:396px;line-height:24px;font-size:15.500px;color:#aaa89a">10</div>
 <div class="arr" style="left:520px;top:407px;border-left-width:3.500px;border-right-width:3.500px;border-top:4.500px solid #8b93a8"></div>
 <svg style="left:549px;top:398px" width="21" height="21" viewBox="0 0 21 21"><path d="M6 3v16" stroke="#5a2a20" stroke-width="1.800"/><path d="M6 3c4-2 7 2 12 0l-4 5 3 5c-4 2-7-2-11 0z" fill="#d8261c" stroke="#8a1a12" stroke-width="1"/></svg>
 <div class="sep" style="left:578px;top:398px"></div>
 <svg style="left:589px;top:397px" width="19" height="24" viewBox="0 0 19 24"><path d="M2 3h11l4 4v15H2z" fill="#fbfcff" stroke="#59668c" stroke-width="1.300"/><path d="M9 7v8M6 11h6" stroke="#3b4f88" stroke-width="1.600"/></svg>
 <div class="tt" style="left:612px;top:391px">O<u>p</u>tions...</div>
 <div class="sep" style="left:690px;top:398px"></div>
 <div class="helpq" style="left:700px;top:397px"><span class="i">?</span></div>
 <div class="tb" style="left:748px;top:392px;width:606px;height:33px"></div><div class="tbend" style="left:1354px;top:392px;height:33px"><div class="endmark"></div></div>
 <div class="grip" style="left:754px;top:398px"></div>
 <div style="left:762px;top:397px;width:177px;height:24px;background:#ece9d8;border:1.500px solid #cdd9f2"></div>
 <div class="s" style="left:766px;top:396px;line-height:24px;font-size:15px;color:#aaa89a">System</div>
 <div class="arr" style="left:925px;top:407px;border-left-width:3.500px;border-right-width:3.500px;border-top:4.500px solid #8b93a8"></div>
 <div style="left:950px;top:397px;width:58px;height:24px;background:#ece9d8;border:1.500px solid #cdd9f2"></div>
 <div class="s" style="left:955px;top:396px;line-height:24px;font-size:15.500px;color:#aaa89a">10</div>
 <div class="arr" style="left:995px;top:407px;border-left-width:3.500px;border-right-width:3.500px;border-top:4.500px solid #8b93a8"></div>
 <div class="sep" style="left:1015px;top:398px"></div>
 <div class="fb" style="left:1022px;top:392px;width:24px;font-size:23px;color:#a3b3d8;font-weight:normal">A</div>
 <div style="left:1022px;top:417px;width:24px;height:3px;background:#a3b3d8"></div>
 <div class="sep" style="left:1052px;top:398px"></div>
 <div class="fb" style="left:1062px;top:392px;width:22px">B</div>
 <div class="fb" style="left:1093px;top:392px;width:22px;font-style:italic">I</div>
 <div class="fb" style="left:1124px;top:392px;width:22px;text-decoration:underline">U</div>
 <div class="sep" style="left:1155px;top:398px"></div>
 <div class="al" style="left:1166px"><i style="width:20px"></i><i style="width:13px"></i><i style="width:20px"></i><i style="width:13px"></i></div>
 <div class="al" style="left:1198px"><i style="width:20px"></i><i style="width:12px;margin-left:4px"></i><i style="width:20px"></i><i style="width:12px;margin-left:4px"></i></div>
 <div class="al" style="left:1229px"><i style="width:20px"></i><i style="width:13px;margin-left:7px"></i><i style="width:20px"></i><i style="width:13px;margin-left:7px"></i></div>
 <div class="al" style="left:1260px;opacity:.75"><i style="width:14px;margin-left:6px"></i><i style="width:14px;margin-left:6px;margin-top:5px"></i><i style="width:14px;margin-left:6px;margin-top:5px"></i></div>
 <div class="al" style="left:1292px;opacity:.75"><i style="width:20px"></i><i style="width:11px;margin-left:9px"></i><i style="width:11px;margin-left:9px"></i><i style="width:20px"></i></div>
 <div class="al" style="left:1323px;opacity:.75"><i style="width:20px"></i><i style="width:11px;margin-left:9px"></i><i style="width:11px;margin-left:9px"></i><i style="width:20px"></i></div>
 <!-- form -->
 <div style="left:170px;top:425px;width:1198px;height:160px;background:#eeede1;border-top:1.500px solid #5a7ac0"></div>
 <div style="left:170px;top:583px;width:10px;height:730px;background:linear-gradient(90deg,#e6e5dc,#f6f5f0)"></div>
 <div style="left:1358px;top:583px;width:10px;height:730px;background:#eeede1"></div>
 <div class="xb" style="left:180px;top:445px"><span class="i">To<u>.</u>..</span></div>
 <div class="xb" style="left:180px;top:481px"><span class="i"><u>C</u>c...</span></div>
 <div class="xb" style="left:180px;top:517px"><span class="i"><u>B</u>cc...</span></div>
 <div class="s" style="left:194px;top:552px;line-height:24px;font-size:15.500px;color:#222">Subject:</div>
 <div class="fld" style="top:445px"></div><div class="fld" style="top:481px"></div><div class="fld" style="top:517px"></div><div class="fld" style="top:551px"></div>
 <div class="s" style="left:297px;top:447.500px;line-height:24px;font-size:15px;color:#3a2030;text-decoration:underline wavy #d02020 1px;text-underline-offset:1px">joe</div>
 <div class="s" style="left:296px;top:552px;line-height:24px;font-size:15.700px;color:#1c1c1c">Upcoming meeting, and my running agenda…</div>
 <!-- body -->
 <div style="left:179px;top:583px;width:1180px;height:730px;background:#fff;border-top:1.500px solid #b5b5ac;border-left:1.500px solid #b8b8b0"></div>
 <div style="left:1337px;top:586px;width:20px;height:722px;background:#fafaf7"></div>
 <div style="left:1338px;top:608px;width:18px;height:273px;background:linear-gradient(90deg,#c4d2f3,#b3c6f0 50%,#bccdf2);border-radius:2px"></div>
 <div style="left:1338px;top:587px;width:18px;height:20px;background:#cfdaf6;border-radius:3px"></div>
 <svg style="left:1339.500px;top:590px" width="15" height="13" viewBox="0 0 15 13"><path d="M2 10l5.500-6 5.500 6" fill="none" stroke="#4464b0" stroke-width="2.600"/></svg>
 <div style="left:1338px;top:1285px;width:18px;height:20px;background:#cfdaf6;border-radius:3px"></div>
 <svg style="left:1339.500px;top:1289px" width="15" height="13" viewBox="0 0 15 13"><path d="M2 3l5.500 6 5.500-6" fill="none" stroke="#3d5ba8" stroke-width="2.600"/></svg>
 <div class="bt" style="top:660px">27 Nov</div>
 <div class="bt" style="top:699.860px">Ask about location for seminar in January</div>
 <div class="bt" style="top:719.790px">Adding another topic</div>
 <div class="bt" style="top:799.510px">20 November</div>
 <div class="bt" style="top:839.370px">Did you order Postcards</div>
 <div class="bt" style="top:919.090px">17 November</div>
 <div class="bt" style="top:958.950px">Ask about DC trip</div>
 <div class="bt" style="top:998.810px">Also, do you have the postcard imagery?</div>
 <div class="bt" style="top:1078.530px">12 November</div>
 <div class="bt" style="top:1118.390px">ABC this morning</div>
 <div class="bt" style="top:1158.250px">Co writing that article for february</div>
 <div class="bt" style="top:1237.970px">13 October</div>
 <!--MSG-->

 <!-- taskbar -->
 <div style="left:72px;top:1308px;width:2010px;height:48px;background:linear-gradient(180deg,#3c7ce2 0%,#4f8fee 7%,#4686ea 14%,#2b64dd 21%,#245edc 40%,#2358d4 75%,#1f4fc4 93%,#1a43a8 100%)"></div>
 <div style="left:72px;top:1316px;width:129px;height:40px;border-radius:3px 14px 14px 3px;background:linear-gradient(180deg,#6cb06a 0%,#3e9a3e 18%,#35913a 55%,#2f8634 85%,#276f2c 100%);box-shadow:2px 0 3px rgba(10,40,120,.6)"></div>
 <svg style="left:84px;top:1321px" width="32" height="30" viewBox="0 0 28 26"><path d="M3 4c3-2 6-1 8 1l-2 8c-2-2-5-3-8-1z" fill="#e85a2a"/><path d="M13 6c3 2 6 2 9 0l-2 8c-3 2-6 2-9 0z" fill="#5fb84a"/><path d="M1 14c3-2 6-1 8 1l-2 8c-2-2-5-3-8-1z" fill="#4a7ce8"/><path d="M10 16c3 2 6 2 9 0l-2 8c-3 2-6 2-9 0z" fill="#f2c83a"/></svg>
 <div style="left:118px;top:1311px;line-height:46px;font-family:'Liberation Sans',sans-serif;font-weight:bold;font-style:italic;font-size:23px;color:#fff;text-shadow:1px 2px 2px #1e5a20;letter-spacing:.3px">start</div>
 <div style="left:214px;top:1320px;width:7px;height:30px;background:repeating-linear-gradient(180deg,#1b46b4 0 2px,transparent 2px 5px);opacity:.7"></div>
 <div style="left:234px;top:1320px;width:214px;height:33px;border-radius:3px;background:linear-gradient(180deg,#5a9af5,#3c80ee 25%,#3877e6 100%)"></div>
 <svg style="left:245px;top:1326px" width="21" height="21" viewBox="0 0 22 22"><rect x="1" y="1" width="20" height="20" rx="3" fill="#f4c65a" stroke="#c48a1e" stroke-width="1.500"/><circle cx="11" cy="11" r="6" fill="#fbe39a" stroke="#e09a20" stroke-width="2"/><path d="M11 7v4l3 2" stroke="#c07a10" stroke-width="1.600" fill="none"/></svg>
 <div class="s" style="left:272px;top:1317px;line-height:38px;font-size:16.200px;color:#e4edfc">Calendar - Microsoft ...</div>
 <div style="left:451px;top:1319px;width:219px;height:35px;border-radius:3px;background:linear-gradient(180deg,#1a46a8,#1f52bc 30%,#2258c4 100%)"></div>
 <svg style="left:464px;top:1325px" width="25" height="24" viewBox="0 0 25 24"><path d="M2 11l9-6 9 6v11H2z" fill="#eef2fb" stroke="#7d8db8" stroke-width="1.200"/><path d="M2 11l9 7 9-7" fill="none" stroke="#7d8db8" stroke-width="1.200"/><path d="M12 3l6-2 5 5-3 6-6-2z" fill="#fff" stroke="#9aa6c6"/></svg>
 <div class="s" style="left:492px;top:1317px;line-height:38px;font-size:16.300px;color:#e4edfc">Untitled - Message (R...</div>
 <div style="left:1847px;top:1316px;width:235px;height:40px;background:linear-gradient(180deg,#3fb0f2 0%,#1a92ea 12%,#118ae4 50%,#0f7fd6 90%,#0c69b8 100%);border-left:1.500px solid #0d5fb0"></div>
 <div style="left:1835px;top:1323px;width:24px;height:24px;border-radius:12px;background:radial-gradient(circle at 40% 35%,#6fb6f6,#2a7ee4 70%);border:1px solid #9fcaf8"></div>
 <svg style="left:1840px;top:1328px" width="14" height="14" viewBox="0 0 14 14"><path d="M9.500 2L4 7l5.500 5" fill="none" stroke="#fff" stroke-width="2.600"/></svg>
 <svg style="left:1862px;top:1325px" width="20" height="20" viewBox="0 0 22 22"><rect x="1" y="1" width="20" height="20" rx="3" fill="#f4c65a" stroke="#c48a1e" stroke-width="1.500"/><circle cx="11" cy="11" r="6" fill="#fbe39a" stroke="#e09a20" stroke-width="2"/><path d="M11 7v4l3 2" stroke="#c07a10" stroke-width="1.600" fill="none"/></svg>
 <div style="left:1886px;top:1324px;width:21px;height:21px;background:#c8102e;border:1.500px solid #3a1a40;border-radius:2px;color:#fff;font-family:'Liberation Sans',sans-serif;font-weight:bold;font-size:19px;line-height:18px;text-align:center">M</div>
 <svg style="left:1911px;top:1325px" width="20" height="20" viewBox="0 0 20 20"><rect x="1" y="2" width="18" height="16" fill="#eef2fb" stroke="#7d8db8"/><rect x="1" y="2" width="18" height="4" fill="#7ea3e8"/><rect x="9" y="9" width="5" height="5" fill="#e05a5a"/></svg>
 <svg style="left:1935px;top:1323px" width="23" height="24" viewBox="0 0 23 24"><rect x="6" y="2" width="11" height="8" fill="#fff" stroke="#444"/><rect x="2" y="9" width="19" height="9" rx="1.500" fill="#d9dde6" stroke="#3c3f4c" stroke-width="1.300"/><rect x="6" y="15" width="11" height="7" fill="#fff" stroke="#444"/><circle cx="15" cy="16" r="4" fill="#6fa8ee" stroke="#2a4f9c"/></svg>
 <div class="s" style="left:1969px;top:1314px;line-height:44px;font-size:16.200px;color:#eaf3ff">2:34 AM</div>
 <!--TASKBAR-->
 </div>
</div>
</body>
</html>
